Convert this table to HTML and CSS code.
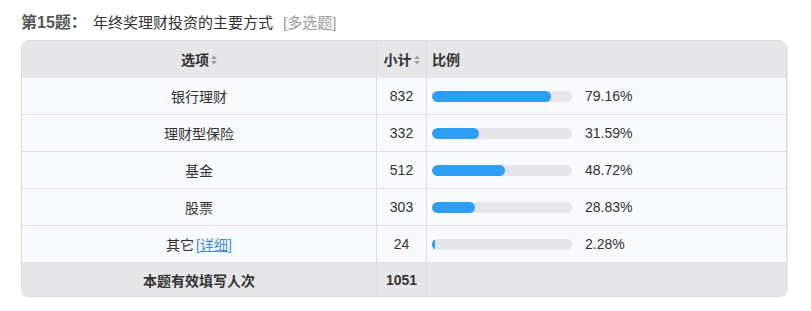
FILE: index.html
```html
<!DOCTYPE html>
<html lang="zh-CN">
<head>
<meta charset="utf-8">
<link rel="stylesheet" href="styles.css">
</head>
<body>
<div class="title">
  <span class="qno">第15题：</span>
  <span class="qtext">年终奖理财投资的主要方式</span>
  <span class="qtype">[多选题]</span>
</div>
<div class="table">
  <div class="row head">
    <div class="c1">选项<svg class="sort" width="6" height="10" viewBox="0 0 6 10"><path d="M3 0.5 L5.8 4 L0.2 4 Z M3 9.5 L5.8 6 L0.2 6 Z" fill="#999"/></svg></div>
    <div class="c2">小计<svg class="sort" width="6" height="10" viewBox="0 0 6 10"><path d="M3 0.5 L5.8 4 L0.2 4 Z M3 9.5 L5.8 6 L0.2 6 Z" fill="#999"/></svg></div>
    <div class="c3">比例</div>
  </div>
  <div class="row">
    <div class="c1">银行理财</div>
    <div class="c2 num">832</div>
    <div class="c3"><div class="track"><div class="fill" style="width:118.7px"></div></div><span class="pct">79.16%</span></div>
  </div>
  <div class="row">
    <div class="c1">理财型保险</div>
    <div class="c2 num">332</div>
    <div class="c3"><div class="track"><div class="fill" style="width:47.4px"></div></div><span class="pct">31.59%</span></div>
  </div>
  <div class="row">
    <div class="c1">基金</div>
    <div class="c2 num">512</div>
    <div class="c3"><div class="track"><div class="fill" style="width:73.1px"></div></div><span class="pct">48.72%</span></div>
  </div>
  <div class="row">
    <div class="c1">股票</div>
    <div class="c2 num">303</div>
    <div class="c3"><div class="track"><div class="fill" style="width:43.2px"></div></div><span class="pct">28.83%</span></div>
  </div>
  <div class="row">
    <div class="c1">其它 <a class="detail" href="#">[<u>详细</u>]</a></div>
    <div class="c2 num">24</div>
    <div class="c3"><div class="track"><div class="fill small" style="width:3px"></div></div><span class="pct">2.28%</span></div>
  </div>
  <div class="row foot">
    <div class="c1">本题有效填写人次</div>
    <div class="c2 num">1051</div>
    <div class="c3"></div>
  </div>
</div>
</body>
</html>
```
FILE: styles.css
```css
html, body {
  margin: 0;
  padding: 0;
  background: #fff;
}
body {
  padding: 11px 0 0 21px;
  font-family: "Liberation Sans", "Noto Sans CJK SC", sans-serif;
  font-size: 14px;
  color: #333;
}
.title {
  height: 24px;
  line-height: 24px;
  margin-bottom: 5px;
  display: flex;
  align-items: center;
}
.qno {
  font-weight: bold;
  font-size: 16px;
  color: #555;
  width: 72px;
}
.qtext {
  color: #333;
  font-size: 15px;
}
.qtype {
  color: #999;
  margin-left: 10px;
  font-size: 15px;
}
.table {
  width: 764px;
  border: 1px solid #dcdcdf;
  border-radius: 8px;
  overflow: hidden;
  box-shadow: 1px 1px 1px rgba(0,0,0,0.08);
}
.row {
  display: grid;
  grid-template-columns: 354px 50px 1fr;
  height: 36px;
  border-top: 1px solid #e3e3e6;
  background: #f8f9fc;
}
.row.head {
  border-top: none;
  background: #e6e6e9;
  font-weight: bold;
}
.row.foot {
  background: #e6e6e9;
  font-weight: bold;
  height: 33px;
}
.row > div {
  display: flex;
  align-items: center;
}
.c1 {
  justify-content: center;
}
.c2 {
  justify-content: center;
  border-left: 1px solid #dedee1;
}
.c3 {
  border-left: 1px solid #dedee1;
  padding-left: 5px;
}
.sort {
  display: block;
  margin-left: 2px;
  margin-top: 1px;
}
.track {
  width: 140px;
  height: 11px;
  border-radius: 6px;
  background: #e6e6ea;
  overflow: hidden;
}
.fill {
  height: 11px;
  border-radius: 6px;
  background: #2c9ff2;
}
.fill.small {
  border-radius: 1px;
}
.pct {
  margin-left: 13px;
  color: #333;
}
.detail {
  color: #3d8fd6;
  text-decoration: none;
  margin-left: 2px;
}
.detail u {
  text-decoration: underline;
}
```
